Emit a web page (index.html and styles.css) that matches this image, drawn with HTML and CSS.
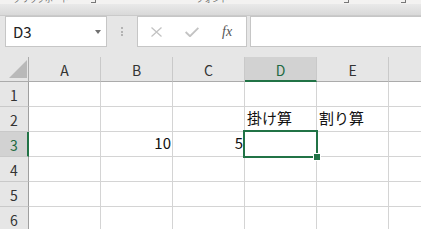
FILE: index.html
```html
<!DOCTYPE html>
<html lang="ja">
<head>
<meta charset="utf-8">
<title>Excel</title>
<link rel="stylesheet" href="styles.css">
</head>
<body>
<div class="window">
  <div class="ribbon-tail">
    <div class="labels">
      <span class="lbl lbl-clip">クリップボード</span>
      <span class="launch launch-1"></span>
      <span class="lbl lbl-font">フォント</span>
      <span class="launch launch-2"></span>
      <span class="launch launch-3"></span>
    </div>
  </div>
  <div class="ribbon-shadow"></div>
  <div class="formula-bar">
    <div class="namebox"><span class="ref">D3</span><span class="caret"></span></div>
    <div class="grip"><i></i><i></i><i></i></div>
    <div class="fnbox">
      <svg class="ic-cancel" width="11" height="10" viewBox="0 0 11 10"><path d="M0.5 0.5 L10.5 9.5 M10.5 0.5 L0.5 9.5" stroke="#c3c3c3" stroke-width="1.3" fill="none"/></svg>
      <svg class="ic-ok" width="14" height="10" viewBox="0 0 14 10"><path d="M0.6 5 L5 9.2 L13.4 0.8" stroke="#c3c3c3" stroke-width="1.9" fill="none"/></svg>
      <span class="fx">fx</span>
    </div>
    <div class="input"></div>
  </div>
  <div class="sheet">
    <div class="corner"><span class="tri"></span></div>
    <div class="colhdr">A</div>
    <div class="colhdr">B</div>
    <div class="colhdr">C</div>
    <div class="colhdr sel">D</div>
    <div class="colhdr">E</div>
    <div class="colhdr"></div>

    <div class="rowhdr">1</div>
    <div class="cell"></div><div class="cell"></div><div class="cell"></div><div class="cell"></div><div class="cell"></div><div class="cell"></div>

    <div class="rowhdr">2</div>
    <div class="cell"></div><div class="cell"></div><div class="cell"></div><div class="cell txt">掛け算</div><div class="cell txt">割り算</div><div class="cell"></div>

    <div class="rowhdr sel">3</div>
    <div class="cell"></div><div class="cell num">10</div><div class="cell num">5</div><div class="cell active"></div><div class="cell"></div><div class="cell"></div>

    <div class="rowhdr">4</div>
    <div class="cell"></div><div class="cell"></div><div class="cell"></div><div class="cell"></div><div class="cell"></div><div class="cell"></div>

    <div class="rowhdr">5</div>
    <div class="cell"></div><div class="cell"></div><div class="cell"></div><div class="cell"></div><div class="cell"></div><div class="cell"></div>

    <div class="rowhdr">6</div>
    <div class="cell"></div><div class="cell"></div><div class="cell"></div><div class="cell"></div><div class="cell"></div><div class="cell"></div>
  </div>
</div>
</body>
</html>
```
FILE: styles.css
```css
html, body {
  margin: 0;
  padding: 0;
}
body {
  width: 421px;
  height: 229px;
  overflow: hidden;
  background: #e6e6e6;
  font-family: "Noto Sans CJK JP", "Noto Sans", sans-serif;
}
.window {
  width: 421px;
  height: 229px;
  overflow: hidden;
}

/* ribbon remnant */
.ribbon-tail {
  height: 4px;
  background: #f3f2f1;
  overflow: hidden;
}
.labels {
  display: flex;
  align-items: flex-end;
  height: 12px;
  margin-top: -8px;
  color: #666;
  font-size: 8px;
  line-height: 10px;
  white-space: nowrap;
}
.lbl-clip { margin-left: 13px; }
.lbl-font { margin-left: 100px; }
.launch {
  width: 5px;
  height: 10px;
  border-right: 1px solid #777;
  border-bottom: 1px solid #777;
  box-sizing: border-box;
  margin-bottom: 1px;
}
.launch-1 { margin-left: 22px; }
.launch-2 { margin-left: 116px; }
.launch-3 { margin-left: 52px; }

.ribbon-shadow {
  height: 11px;
  background: linear-gradient(#e9e9e9, #d9d9d9);
  border-bottom: 1px solid #cacaca;
}

/* formula bar */
.formula-bar {
  display: flex;
  height: 31px;
  padding-left: 5px;
}
.namebox {
  width: 102px;
  box-sizing: border-box;
  border: 1px solid #c6c6c6;
  background: #fff;
  display: flex;
  align-items: center;
  justify-content: space-between;
  padding: 0 5px 0 7px;
}
.ref {
  font-size: 15px;
  color: #222;
  line-height: 18px;
}
.caret {
  width: 0;
  height: 0;
  border-left: 3.5px solid transparent;
  border-right: 3.5px solid transparent;
  border-top: 4px solid #707070;
}
.grip {
  width: 30px;
  display: flex;
  flex-direction: column;
  align-items: center;
  justify-content: center;
  gap: 1.5px;
}
.grip i {
  display: block;
  width: 2px;
  height: 2px;
  background: #b3b3b3;
}
.fnbox {
  width: 110px;
  box-sizing: border-box;
  border: 1px solid #c6c6c6;
  background: #fff;
  display: flex;
  align-items: center;
  padding-left: 13px;
}
.ic-ok { margin-left: 23px; }
.fx {
  margin-left: 23px;
  font-family: "Liberation Serif", "DejaVu Serif", serif;
  font-style: italic;
  font-size: 14px;
  color: #555;
  line-height: 14px;
}
.input {
  flex: 1;
  margin-left: 3px;
  border: 1px solid #c6c6c6;
  border-right: none;
  background: #fff;
}

/* sheet */
.sheet {
  margin-top: 10px;
  display: grid;
  grid-template-columns: 29px repeat(6, 72px);
  grid-auto-rows: 25px;
}
.sheet > div {
  box-sizing: border-box;
}
.corner {
  background: #e6e6e6;
  border-right: 1px solid #ababab;
  border-bottom: 1px solid #ababab;
  display: flex;
  align-items: flex-end;
  justify-content: flex-end;
  padding: 0 1px 3px 0;
}
.tri {
  width: 0;
  height: 0;
  border-left: 18px solid transparent;
  border-bottom: 18px solid #b9b9b9;
}
.colhdr {
  background: #e6e6e6;
  border-right: 1px solid #c9c9c9;
  border-bottom: 1px solid #ababab;
  display: flex;
  align-items: center;
  justify-content: center;
  font-size: 14px;
  color: #333;
  padding-top: 1px;
}
.colhdr.sel {
  background: #d2d2d2;
  border-bottom: 2px solid #217346;
  color: #1f6a42;
  padding-top: 2px;
}
.rowhdr {
  background: #e6e6e6;
  border-right: 1px solid #9f9f9f;
  border-bottom: 1px solid #c9c9c9;
  display: flex;
  align-items: center;
  justify-content: center;
  font-size: 14px;
  color: #333;
  padding-top: 1px;
}
.rowhdr.sel {
  background: #d2d2d2;
  border-right: 2px solid #217346;
  color: #1f6a42;
  padding-left: 1px;
}
.cell {
  background: #fff;
  border-right: 1px solid #d4d4d4;
  border-bottom: 1px solid #d4d4d4;
  display: flex;
  align-items: flex-start;
  font-size: 15px;
  line-height: 21px;
  color: #111;
  white-space: nowrap;
}
.cell.txt {
  padding-left: 2px;
}
.cell.num {
  justify-content: flex-end;
  padding-right: 1px;
}
.cell.active {
  position: relative;
}
.cell.active::before {
  content: "";
  position: absolute;
  left: -2px;
  top: -2px;
  width: 75px;
  height: 28px;
  box-sizing: border-box;
  border: 2px solid #217346;
  z-index: 1;
}
.cell.active::after {
  content: "";
  position: absolute;
  left: 68px;
  top: 21px;
  width: 8px;
  height: 8px;
  box-sizing: border-box;
  background: #217346;
  border: 1px solid #fff;
  z-index: 2;
}
```
